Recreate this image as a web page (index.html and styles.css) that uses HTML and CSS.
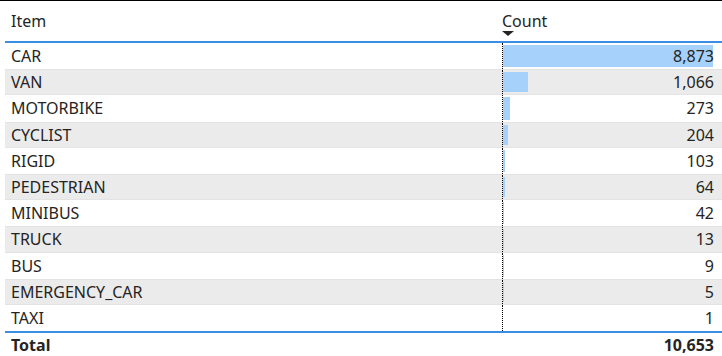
FILE: index.html
```html
<!DOCTYPE html>
<html>
<head>
<meta charset="utf-8">
<link rel="stylesheet" href="styles.css">
</head>
<body>
<div class="frame">
  <div class="table">
    <div class="row head">
      <div class="c1">Item</div>
      <div class="c2"><span class="htext">Count</span><span class="sort"></span></div>
    </div>
    <div class="body">
      <div class="row"><div class="c1">CAR</div><div class="c2 num"><span class="bar" style="width:210px"></span><span class="v">8,873</span></div></div>
      <div class="row alt"><div class="c1">VAN</div><div class="c2 num"><span class="bar" style="width:25.2px"></span><span class="v">1,066</span></div></div>
      <div class="row"><div class="c1">MOTORBIKE</div><div class="c2 num"><span class="bar" style="width:6.5px"></span><span class="v">273</span></div></div>
      <div class="row alt"><div class="c1">CYCLIST</div><div class="c2 num"><span class="bar" style="width:4.8px"></span><span class="v">204</span></div></div>
      <div class="row"><div class="c1">RIGID</div><div class="c2 num"><span class="bar" style="width:2.4px"></span><span class="v">103</span></div></div>
      <div class="row alt"><div class="c1">PEDESTRIAN</div><div class="c2 num"><span class="bar" style="width:1.5px"></span><span class="v">64</span></div></div>
      <div class="row"><div class="c1">MINIBUS</div><div class="c2 num"><span class="bar" style="width:1px"></span><span class="v">42</span></div></div>
      <div class="row alt"><div class="c1">TRUCK</div><div class="c2 num"><span class="bar" style="width:0.3px"></span><span class="v">13</span></div></div>
      <div class="row"><div class="c1">BUS</div><div class="c2 num"><span class="bar" style="width:0.2px"></span><span class="v">9</span></div></div>
      <div class="row alt"><div class="c1">EMERGENCY_CAR</div><div class="c2 num"><span class="bar" style="width:0.1px"></span><span class="v">5</span></div></div>
      <div class="row"><div class="c1">TAXI</div><div class="c2 num"><span class="bar" style="width:0px"></span><span class="v">1</span></div></div>
    </div>
    <div class="row total">
      <div class="c1">Total</div>
      <div class="c2 num"><span class="v">10,653</span></div>
    </div>
  </div>
</div>
</body>
</html>
```

FILE: styles.css
```css
* { box-sizing: border-box; }
html, body {
  margin: 0;
  padding: 0;
  background: #ffffff;
}
body {
  width: 722px;
  height: 356px;
  overflow: hidden;
  font-family: "Noto Sans", "Open Sans", sans-serif;
  color: #252423;
}
.frame {
  border-top: 1px solid #000;
  padding-left: 5px;
}
.table {
  display: flex;
  flex-direction: column;
}
.row {
  display: grid;
  grid-template-columns: 497px 220px;
  font-size: 16px;
  line-height: 20px;
}
.head {
  height: 42px;
  border-bottom: 2px solid #3b8fe3;
}
.head .c1, .head .c2 {
  padding-top: 10px;
}
.head .c1 { padding-left: 6px; }
.head .c2 {
  display: flex;
  flex-direction: column;
  align-items: flex-start;
}
.sort {
  margin-top: 0;
  width: 0;
  height: 0;
  border-left: 6px solid transparent;
  border-right: 6px solid transparent;
  border-top: 5px solid #252423;
}
.body .row {
  height: 26.2px;
  align-items: center;
}
.body .row.alt {
  background: #ebebeb;
  border-top: 1px solid #e3e3e3;
  border-bottom: 1px solid #e3e3e3;
}
.body .c1 {
  padding-left: 6px;
}
.body .c2 {
  height: 100%;
  border-left: 1px dotted #000;
  position: relative;
  display: flex;
  align-items: center;
  justify-content: flex-end;
  padding-right: 8px;
}
.bar {
  position: absolute;
  left: 0;
  top: 2px;
  bottom: 2px;
  background: #a6d1fb;
}
.v { position: relative; }
.total {
  border-top: 2px solid #3b8fe3;
  height: 25px;
  align-items: center;
  font-weight: bold;
}
.total .c1 { padding-left: 6px; }
.total .c2 { text-align: right; padding-right: 8px; }
```
